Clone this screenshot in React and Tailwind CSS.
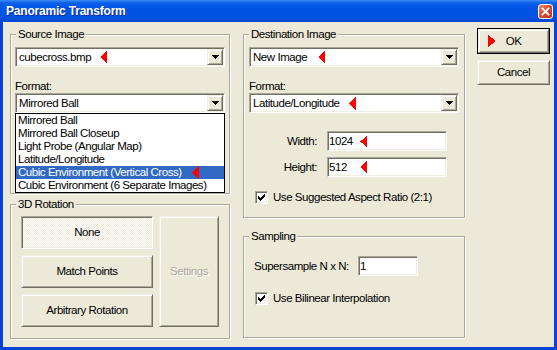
import React from "react";

const sunken =
  "border border-t-[#ACA899] border-l-[#ACA899] border-b-white border-r-white shadow-[inset_1px_1px_0_#716F64,inset_-1px_-1px_0_#F1EFE2]";
const raised =
  "border border-t-[#F1EFE2] border-l-[#F1EFE2] border-b-[#716F64] border-r-[#716F64] shadow-[inset_1px_1px_0_#ffffff,inset_-1px_-1px_0_#ACA899]";

function Tri({ dir = "left", w = 7, h = 14, className = "" }) {
  const pts = dir === "left" ? `${w},0 ${w},${h} 0,${h / 2}` : `0,0 0,${h} ${w},${h / 2}`;
  return (
    <svg width={w} height={h} viewBox={`0 0 ${w} ${h}`} className={`block shrink-0 ${className}`} shapeRendering="crispEdges">
      <polygon points={pts} fill="#FF0000" />
    </svg>
  );
}

function Group({ label, className = "", children }) {
  return (
    <div className={`relative border border-[#ACA899] shadow-[inset_1px_1px_0_#ffffff,1px_1px_0_#ffffff] ${className}`}>
      <span className="absolute left-[5px] top-[-7px] bg-[#ECE9D8] px-[2px] leading-[13px] whitespace-nowrap">{label}</span>
      {children}
    </div>
  );
}

function DropArrow() {
  return (
    <div className={`w-[16px] h-[16px] shrink-0 flex items-center justify-center bg-[#ECE9D8] ${raised}`}>
      <svg width="7" height="4" viewBox="0 0 7 4" shapeRendering="crispEdges" className="block">
        <polygon points="0,0 7,0 3.5,4" fill="#000" />
      </svg>
    </div>
  );
}

function Combo({ children, className = "" }) {
  return (
    <div className={`h-[20px] w-[210px] p-[1px] bg-white flex ${sunken} ${className}`}>
      <div className="flex-1 min-w-0 flex items-center pl-[2px] whitespace-nowrap">{children}</div>
      <DropArrow />
    </div>
  );
}

function Field({ className = "", children }) {
  return (
    <div className={`h-[20px] p-[1px] bg-white flex items-center whitespace-nowrap ${sunken} ${className}`}>
      {children}
    </div>
  );
}

function Check() {
  const px = [
    [6],
    [5, 6],
    [0, 4, 5, 6],
    [0, 1, 3, 4, 5],
    [0, 1, 2, 3, 4],
    [1, 2, 3],
    [2],
  ];
  return (
    <div className={`w-[13px] h-[13px] shrink-0 bg-white flex items-center justify-center ${sunken}`}>
      <svg width="7" height="7" viewBox="0 0 7 7" shapeRendering="crispEdges" className="block">
        {px.map((row, y) => row.map((x) => <rect key={`${x}-${y}`} x={x} y={y} width="1" height="1" fill="#000" />))}
      </svg>
    </div>
  );
}

function Btn({ children, className = "" }) {
  return <div className={`flex items-center justify-center bg-[#ECE9D8] ${raised} ${className}`}>{children}</div>;
}

export default function App() {
  const items = [
    "Mirrored Ball",
    "Mirrored Ball Closeup",
    "Light Probe (Angular Map)",
    "Latitude/Longitude",
    "Cubic Environment (Vertical Cross)",
    "Cubic Environment (6 Separate Images)",
  ];
  return (
    <div className="w-[557px] h-[350px] flex flex-col bg-[#0842D8] font-['Liberation_Sans',Arial,sans-serif] text-[11.5px] leading-[13px] tracking-[-0.45px] text-black overflow-hidden">
      {/* Title bar */}
      <div className="h-[22px] shrink-0 flex items-center justify-between pl-[6px] pr-[4px] bg-[image:linear-gradient(to_bottom,#3C8EF3_0px,#0A5FEA_3px,#0055E5_8px,#0054E3_16px,#0047D0_22px)]">
        <span className="text-white font-bold text-[12px] tracking-[-0.2px] [text-shadow:1px_1px_0_#0A2A9C]">
          Panoramic Transform
        </span>
        <div className="w-[15px] h-[15px] rounded-[3px] border border-white bg-[image:linear-gradient(to_bottom_right,#F08A6A,#D9462A_50%,#C2381C)] flex items-center justify-center">
          <svg width="9" height="9" viewBox="0 0 9 9" className="block">
            <path d="M1.5 1.5 L7.5 7.5 M7.5 1.5 L1.5 7.5" stroke="#fff" strokeWidth="1.8" strokeLinecap="square" />
          </svg>
        </div>
      </div>

      {/* Client area */}
      <div className="flex-1 mx-[3px] mb-[3px] bg-[#ECE9D8] flex items-start">
        {/* Left column */}
        <div className="ml-[7px] mt-[12px] w-[220px] shrink-0 flex flex-col">
          <Group label="Source Image" className="h-[160px] px-[4px] pt-[12px]">
            <Combo>
              <span className="w-[81px] shrink-0">cubecross.bmp</span>
              <Tri w={7} h={14} />
            </Combo>
            <div className="mt-[13px] h-[13px]">Format:</div>
            <div className="relative z-10">
              <Combo>
                <span>Mirrored Ball</span>
              </Combo>
              <div className="absolute left-0 top-full w-[210px] border border-black bg-white">
                {items.map((t, i) => (
                  <div
                    key={t}
                    className={`h-[13px] flex items-center pl-[2px] whitespace-nowrap ${
                      i === 4 ? "bg-[#316AC5] text-white" : ""
                    }`}
                  >
                    <span className={i === 4 ? "w-[174px] shrink-0" : ""}>{t}</span>
                    {i === 4 && <Tri w={7} h={13} />}
                  </div>
                ))}
              </div>
            </div>
          </Group>

          <Group label="3D Rotation" className="mt-[10px] h-[135px] pl-[10px] pt-[11px]">
            <div className="flex gap-[6px]">
              <div className="w-[132px] flex flex-col gap-[6px]">
                <div
                  className={`h-[33px] flex items-center justify-center bg-[image:repeating-conic-gradient(#ffffff_0%_25%,#ECE9D8_0%_50%)] bg-[length:2px_2px] ${sunken}`}
                >
                  None
                </div>
                <Btn className="h-[33px]">Match Points</Btn>
                <Btn className="h-[33px]">Arbitrary Rotation</Btn>
              </div>
              <Btn className="w-[60px] h-[111px] text-[#ACA899] [text-shadow:1px_1px_0_#ffffff]">Settings</Btn>
            </div>
          </Group>
        </div>

        {/* Middle column */}
        <div className="ml-[13px] mt-[12px] w-[222px] shrink-0 flex flex-col">
          <Group label="Destination Image" className="h-[184px] pt-[12px]">
            <div className="px-[5px]">
              <Combo>
                <span className="w-[65px] shrink-0">New Image</span>
                <Tri w={7} h={12} />
              </Combo>
              <div className="mt-[13px] h-[13px]">Format:</div>
              <Combo>
                <span className="w-[96px] shrink-0">Latitude/Longitude</span>
                <Tri w={7} h={13} />
              </Combo>
            </div>
            <div className="mt-[18px] flex items-center">
              <span className="w-[73px] text-right">Width:</span>
              <Field className="ml-[10px] w-[120px]">
                <span className="w-[31px] shrink-0">1024</span>
                <Tri w={7} h={11} />
              </Field>
            </div>
            <div className="mt-[6px] flex items-center">
              <span className="w-[73px] text-right">Height:</span>
              <Field className="ml-[10px] w-[120px]">
                <span className="w-[31px] shrink-0">512</span>
                <Tri w={7} h={12} />
              </Field>
            </div>
            <div className="mt-[14px] h-[13px] pl-[11px] flex items-center">
              <Check />
              <span className="ml-[5px] whitespace-nowrap">Use Suggested Aspect Ratio (2:1)</span>
            </div>
          </Group>

          <Group label="Sampling" className="mt-[18px] h-[102px] pt-[19px]">
            <div className="flex items-center pl-[10px]">
              <span className="w-[104px] whitespace-nowrap">Supersample N x N:</span>
              <Field className="w-[60px]">1</Field>
            </div>
            <div className="mt-[16px] h-[13px] pl-[11px] flex items-center">
              <Check />
              <span className="ml-[5px] whitespace-nowrap">Use Bilinear Interpolation</span>
            </div>
          </Group>
        </div>

        {/* Right column */}
        <div className="ml-[12px] mt-[6px] w-[73px] shrink-0 flex flex-col">
          <div className="h-[26px] border border-black flex">
            <Btn className="relative flex-1">
              <Tri dir="right" w={8} h={12} className="absolute left-[9px] top-[5px]" />
              OK
            </Btn>
          </div>
          <Btn className="mt-[6px] h-[25px]">Cancel</Btn>
        </div>
      </div>
    </div>
  );
}
